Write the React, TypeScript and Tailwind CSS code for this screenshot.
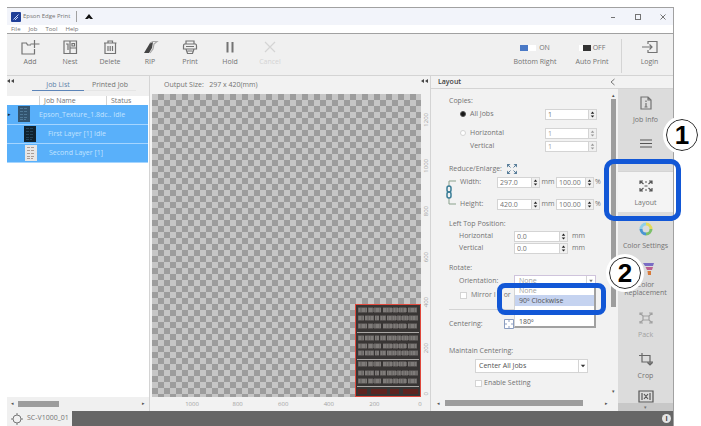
import React, { useState } from 'react';

const FONT = "font-['Open_Sans','Noto_Sans',sans-serif]";

type Tool = { label: string; icon: React.ReactNode; disabled?: boolean };

function Glyph({ children, className = 'w-5 h-4' }: { children: React.ReactNode; className?: string }) {
  return (
    <svg viewBox="0 0 20 16" className={className} fill="none" stroke="currentColor" strokeWidth="1.2">
      {children}
    </svg>
  );
}

const tools: Tool[] = [
  {
    label: 'Add',
    icon: (
      <Glyph>
        <path d="M11 6H7.500L6.500 4H2v11h12.500v-5M14.500 1v8M10.500 5h9" />
      </Glyph>
    ),
  },
  {
    label: 'Nest',
    icon: (
      <Glyph>
        <path d="M4 2h12.500v12.500H4zM10 2v12.500M10 9h6.500M12 4.500h2.500v2.500H12zM6 5h2v6" />
      </Glyph>
    ),
  },
  {
    label: 'Delete',
    icon: (
      <Glyph>
        <path d="M4 4h12.500M8 4V2h4.500v2M5 4v10.500h10.500V4M8 7v5M10.200 7v5M12.500 7v5" />
      </Glyph>
    ),
  },
  {
    label: 'RIP',
    icon: (
      <Glyph>
        <path d="M4 14 10 4l3-1-1 6-3 5z" fill="#444" stroke="none" />
        <path d="M10 4 13 2.500h4L14 5l-1 5-3 4" stroke="#aaa" />
      </Glyph>
    ),
  },
  {
    label: 'Print',
    icon: (
      <Glyph>
        <path d="M6 5V2h8v3M4.500 5h11a2 2 0 0 1 1 2v3h-13V7a2 2 0 0 1 1-2zM6 10l1.500 4.500h5L14 10M6 7.500h8M7.500 12h5" />
      </Glyph>
    ),
  },
  {
    label: 'Hold',
    icon: (
      <Glyph>
        <path d="M7.500 3v10.500M12.500 3v10.500" strokeWidth="2" />
      </Glyph>
    ),
  },
  {
    label: 'Cancel',
    disabled: true,
    icon: (
      <Glyph>
        <path d="m5 3 10 10M15 3 5 13" />
      </Glyph>
    ),
  },
];

const jobs = [
  { name: 'Epson_Texture_1.8dc..', status: 'Idle', thumb: 'bg-[#33546f]', ink: '#4f7896', indent: 'ml-[3px]', gap: 'ml-[9px]', parent: true },
  { name: 'First Layer [1]', status: 'Idle', thumb: 'bg-[#10222f]', ink: '#24445a', indent: 'ml-[17px]', gap: 'ml-[12px]' },
  { name: 'Second Layer [1]', status: '', thumb: 'bg-[#e6e6e6]', ink: '#a89c96', indent: 'ml-[18px]', gap: 'ml-[12px]' },
];

function Thumb({ ink }: { ink: string }) {
  return (
    <svg viewBox="0 0 12 16" className="w-3 h-4" stroke={ink} strokeDasharray="3 1">
      <path d="M2 2.500h8M2 5.500h8M2 8.500h8M2 11.500h8M2 13.500h6" />
    </svg>
  );
}

function TitleBar() {
  return (
    <>
      <div className="h-[17px] flex items-center bg-[#f2f4fa] pl-1 pr-1">
        <svg viewBox="0 0 10 10" className="w-[10px] h-[10px]">
          <rect width="10" height="10" rx="1" fill="#1f3f98" />
          <path d="M2.500 7.500 7.500 2.500M4 8l3-3" stroke="#c9d8ff" />
        </svg>
        <h1 className="ml-[2px] text-[6px] text-neutral-500">Epson Edge Print</h1>
        <span className="ml-[6px] w-px h-[11px] bg-neutral-400" />
        <svg viewBox="0 0 8 6" className="ml-[8px] w-2 h-[6px]">
          <path d="M0 5 4 0l4 5H5.500L4 4 2.500 5z" fill="#111" />
        </svg>
        <div className="ml-auto flex gap-[12px] text-neutral-500">
          <button type="button" aria-label="Minimize" className="w-[13px] flex justify-center">
            <svg viewBox="0 0 8 8" className="w-2 h-2" stroke="currentColor">
              <path d="M2 4.500h4" />
            </svg>
          </button>
          <button type="button" aria-label="Maximize" className="w-[13px] flex justify-center">
            <svg viewBox="0 0 8 8" className="w-2 h-2" stroke="currentColor" fill="none">
              <rect x="1.500" y="1.500" width="5" height="5" />
            </svg>
          </button>
          <button type="button" aria-label="Close" className="w-[13px] flex justify-center">
            <svg viewBox="0 0 8 8" className="w-2 h-2" stroke="currentColor">
              <path d="m1.500 1.500 5 5M6.500 1.500l-5 5" />
            </svg>
          </button>
        </div>
      </div>
      <nav className="h-[9px] flex items-center gap-[8px] bg-white border-b border-neutral-400 pl-1 text-[6px] leading-[8px] text-neutral-500">
        <button type="button">File</button>
        <button type="button">Job</button>
        <button type="button">Tool</button>
        <button type="button">Help</button>
      </nav>
    </>
  );
}

function Toolbar() {
  const [bottomRight, setBottomRight] = useState(true);
  const [autoPrint, setAutoPrint] = useState(false);

  return (
    <div className="h-[42px] flex items-start bg-[#f0f0f0] border-b border-neutral-300 pt-[5px] pl-[3px] text-neutral-500">
      {tools.map((tool) => (
        <button
          key={tool.label}
          type="button"
          disabled={tool.disabled}
          className={`w-[40px] flex flex-col items-center text-[7px] leading-[10px] gap-[2px] ${tool.disabled ? 'text-neutral-300' : ''}`}
        >
          {tool.icon}
          {tool.label}
        </button>
      ))}
      <div className="ml-auto flex pt-1">
        <label className="w-[60px] flex flex-col items-center text-[7px] leading-[10px] gap-1">
          <input
            type="checkbox"
            checked={bottomRight}
            onChange={(e) => setBottomRight(e.target.checked)}
            className="sr-only"
          />
          <span className="flex items-center gap-[3px] h-[10px]">
            <span className="w-4 h-[6px] bg-white flex">
              <span className="w-2 bg-[#4a79c6]" />
            </span>
            ON
          </span>
          Bottom Right
        </label>
        <label className="w-[54px] flex flex-col items-center text-[7px] leading-[10px] gap-1">
          <input
            type="checkbox"
            checked={autoPrint}
            onChange={(e) => setAutoPrint(e.target.checked)}
            className="sr-only"
          />
          <span className="flex items-center gap-[2px] h-[10px]">
            <span className="w-3 h-[6px] bg-white flex justify-end">
              <span className="w-2 bg-[#333]" />
            </span>
            OFF
          </span>
          Auto Print
        </label>
      </div>
      <div className="ml-[2px] h-[34px] w-[52px] border-l border-neutral-300 flex justify-center">
        <button type="button" className="ml-1 flex flex-col items-center text-[7px] leading-[10px] gap-[2px]">
          <Glyph>
            <path d="M8 5V2.500h9v11H8V11M2 8h10M9.500 5.500 12 8l-2.500 2.500" />
          </Glyph>
          Login
        </button>
      </div>
    </div>
  );
}

function Collapse() {
  return (
    <svg viewBox="0 0 8 6" className="w-2 h-[6px]" fill="#444">
      <path d="M0 3 3 1v4zM4 3l3-2v4z" />
    </svg>
  );
}

function JobPanel() {
  return (
    <section className="w-[142px] shrink-0 flex flex-col bg-white">
      <div className="h-[20px] flex items-start bg-[#f0f0f0] text-[7px] leading-[10px] text-neutral-500">
        <span className="pt-[2px] w-[25px]">
          <Collapse />
        </span>
        <button type="button" className="w-[52px] h-[15px] pt-1 border-b border-[#5b84b8] text-[#5d7fa8]">
          Job List
        </button>
        <button type="button" className="w-[52px] h-[15px] pt-1 border-b border-neutral-200">
          Printed Job
        </button>
      </div>
      <table className="w-[141px] table-fixed border-collapse text-[7px] leading-[9px]">
        <thead>
          <tr className="h-[9px] bg-white text-neutral-500">
            <th className="w-[99px] p-0 font-normal text-left">
              <span className="ml-[32px] pl-1 block border-l border-neutral-300">Job Name</span>
            </th>
            <th className="p-0 font-normal text-left">
              <span className="pl-1 block border-l border-neutral-300">Status</span>
            </th>
          </tr>
        </thead>
        <tbody>
          {jobs.map((job) => (
            <tr key={job.name} className="h-[19px] bg-[#59b0fa] border-b border-[#a5d5ff] text-[#c2e3ff]">
              <td colSpan={2} className="p-0">
                <div className="flex items-center whitespace-nowrap">
                  {job.parent && <span className="ml-px w-[7px] text-[5px] text-[#123]">▸</span>}
                  <span className={`${job.indent} ${job.thumb} w-3 h-4`}>
                    <Thumb ink={job.ink} />
                  </span>
                  <span className={job.gap}>
                    {job.name} {job.status}
                  </span>
                </div>
              </td>
            </tr>
          ))}
        </tbody>
      </table>
      <div className="mt-auto h-[14px] flex items-center bg-[#f0f0f0] px-1 text-neutral-600">
        <span className="text-[5px] w-[7px]">◂</span>
        <span className="w-[41px] h-[6px] bg-[#9d9d9d]" />
        <span className="ml-auto text-[5px]">▸</span>
      </div>
    </section>
  );
}

const textRows = [6, 14, 22, 34, 42, 49, 60, 69, 77];

function PrintPreview() {
  return (
    <svg viewBox="0 0 66 93" className="w-[66px] h-[93px]">
      <rect x="0.500" y="0.500" width="65" height="92" fill="#383534" stroke="#e0483c" />
      {textRows.map((y, i) => (
        <g key={y} fill="none">
          <path d={`M3 ${y}h60`} stroke="#6e6b69" strokeWidth="5" strokeDasharray={i % 2 ? '6 1 9 1 4 1' : '9 1 5 1 7 2'} />
          <path d={`M4 ${y - 1}h58M4 ${y + 1}h58`} stroke="#8f8c8a" strokeDasharray={i % 2 ? '2 2 1 1' : '1 2 3 1'} />
        </g>
      ))}
      <path d="M2 28.500h62M2 55.500h62M2 82.500h62" stroke="#aaa7a5" />
      <path d="M3 87.500h60" stroke="#5e2420" strokeWidth="5" strokeDasharray="9 4 16 3" />
    </svg>
  );
}

function CanvasPanel() {
  return (
    <section className="flex-1 min-w-0 flex flex-col border-l border-neutral-300 bg-[#f2f2f2] text-neutral-400">
      <div className="h-[18px] flex items-start pl-[14px] text-[7px] leading-[10px] text-neutral-500">
        <p className="pt-1 whitespace-pre">Output Size:   297 x 420(mm)</p>
        <span className="ml-auto pt-[2px] pr-px">
          <Collapse />
        </span>
      </div>
      <div className="flex-1 flex">
        <div className="flex-1 ml-[2px] flex items-end justify-end bg-[#c6c6c6] bg-[repeating-conic-gradient(#9d9d9d_0_25%,#c6c6c6_0_50%)] bg-[length:12px_12px]">
          <PrintPreview />
        </div>
        <div className="w-[9px] flex flex-col justify-between items-center pt-[23px] text-[6px] leading-[8px]">
          {['1200', '1000', '800', '600', '400', '200', '0'].map((n) => (
            <span key={n} className="h-[6px] flex items-center justify-center">
              <span className="[writing-mode:vertical-rl] rotate-180">{n}</span>
            </span>
          ))}
        </div>
      </div>
      <div className="h-[14px] flex justify-between pt-[3px] pl-[40px] pr-2 text-[6px] leading-[8px]">
        {['1000', '800', '600', '400', '200', '0'].map((n) => (
          <span key={n} className="w-1 flex justify-center">
            {n}
          </span>
        ))}
      </div>
    </section>
  );
}

function Spinner({ label, value, width, muted }: { label: string; value: string; width: string; muted?: boolean }) {
  return (
    <span className={`${width} h-[11px] flex bg-white border border-neutral-300`}>
      <input
        type="text"
        aria-label={label}
        defaultValue={value}
        className={`flex-1 min-w-0 px-[2px] text-[7px] leading-[9px] outline-none ${muted ? 'text-neutral-400' : 'text-neutral-500'}`}
      />
      <svg viewBox="0 0 8 9" className="w-2 h-[9px] bg-[#f0f0f0] border-l border-neutral-300" fill={muted ? '#999' : '#222'}>
        <path d="M4 1 6 3.500H2zM4 8 6 5.500H2z" />
      </svg>
    </span>
  );
}

function LayoutPanel() {
  const [target, setTarget] = useState('all');
  const options = ['None', '90º Clockwise', '180º'];

  return (
    <section className="w-[188px] shrink-0 flex flex-col border-l border-neutral-300 bg-[#f2f2f2] text-[7px] leading-[12px] text-neutral-500">
      <header className="h-[13px] flex items-center justify-between border-b border-neutral-300 pl-[7px] pr-[3px]">
        <h2 className="font-semibold text-neutral-700">Layout</h2>
        <button type="button" aria-label="Collapse layout">
          <svg viewBox="0 0 5 8" className="w-[5px] h-2" fill="none" stroke="#777">
            <path d="M4.500 1 1 4l3.500 3" />
          </svg>
        </button>
      </header>
      <div className="flex-1 flex">
        <form className="flex-1 min-w-0 pl-[18px] pt-[6px]">
          <h3>Copies:</h3>
          <div className="mt-px h-3 flex items-center">
            <label className="w-[96px] pl-[11px] flex items-center">
              <input
                type="radio"
                name="target"
                checked={target === 'all'}
                onChange={() => setTarget('all')}
                className="appearance-none w-[6px] h-[6px] rounded-full bg-white border border-neutral-300 checked:bg-neutral-900 checked:border-neutral-600"
              />
              <span className="ml-1">All Jobs</span>
            </label>
            <Spinner label="Copies of all jobs" value="1" width="w-[52px]" />
          </div>
          <div className="mt-[7px] h-3 flex items-center">
            <label className="w-[96px] pl-[11px] flex items-center">
              <input
                type="radio"
                name="target"
                checked={target === 'horizontal'}
                onChange={() => setTarget('horizontal')}
                className="appearance-none w-[6px] h-[6px] rounded-full bg-white border border-neutral-300 checked:bg-neutral-900 checked:border-neutral-600"
              />
              <span className="ml-1">Horizontal</span>
            </label>
            <Spinner label="Horizontal copies" value="1" width="w-[52px]" muted />
          </div>
          <div className="mt-px h-3 flex items-center">
            <span className="w-[96px] pl-[21px]">Vertical</span>
            <Spinner label="Vertical copies" value="1" width="w-[52px]" muted />
          </div>

          <h3 className="mt-[11px] h-3 flex items-center gap-1">
            Reduce/Enlarge:
            <svg viewBox="0 0 12 12" className="w-3 h-3" fill="#5a7f9b">
              <path d="M1 1h3.500L1 4.500zM11 1v3.500L7.500 1zM1 11V7.500L4.500 11zM11 11H7.500L11 7.500z" />
              <path d="m2 2 2.500 2.500M10 2 7.500 4.500M2 10l2.500-2.500M10 10 7.500 7.500" stroke="#5a7f9b" />
            </svg>
          </h3>
          <div className="mt-px -ml-[4px] flex">
            <svg viewBox="0 0 12 34" className="w-3 h-[34px]" fill="none">
              <path d="M11 5H4v6M4 22v6h7" stroke="#8aa18c" />
              <rect x="2" y="10" width="4" height="6" rx="2" stroke="#3a7d96" strokeWidth="1.500" />
              <rect x="2" y="16" width="4" height="6" rx="2" stroke="#3a7d96" strokeWidth="1.500" />
            </svg>
            <div className="flex flex-col gap-[10px]">
              <div className="h-3 flex items-center whitespace-nowrap">
                <span className="w-[40px] pl-[3px]">Width:</span>
                <Spinner label="Width" value="297.0" width="w-[43px]" />
                <span className="w-[16px] text-center">mm</span>
                <Spinner label="Width percent" value="100.00" width="w-[38px]" />
                <span className="pl-px">%</span>
              </div>
              <div className="h-3 flex items-center whitespace-nowrap">
                <span className="w-[40px] pl-[3px]">Height:</span>
                <Spinner label="Height" value="420.0" width="w-[43px]" />
                <span className="w-[16px] text-center">mm</span>
                <Spinner label="Height percent" value="100.00" width="w-[38px]" />
                <span className="pl-px">%</span>
              </div>
            </div>
          </div>

          <h3 className="mt-2">Left Top Position:</h3>
          <div className="h-3 flex items-center">
            <span className="w-[65px] pl-[10px]">Horizontal</span>
            <Spinner label="Left position" value="0.0" width="w-[54px]" />
            <span className="pl-1">mm</span>
          </div>
          <div className="h-3 flex items-center">
            <span className="w-[65px] pl-[10px]">Vertical</span>
            <Spinner label="Top position" value="0.0" width="w-[54px]" />
            <span className="pl-1">mm</span>
          </div>

          <h3 className="mt-2">Rotate:</h3>
          <div className="mt-px h-3 flex items-center">
            <label htmlFor="orientation" className="w-[65px] pl-[10px]">
              Orientation:
            </label>
            <div className="relative w-[82px]">
              <select
                id="orientation"
                className="appearance-none block w-full h-3 bg-white border border-[#cfc4dc] pl-1 text-[7px] leading-[10px] text-neutral-400"
              >
                <option>None</option>
              </select>
              <svg viewBox="0 0 9 10" className="absolute right-px top-px w-[9px] h-[10px] border-l border-neutral-300" fill="#777">
                <path d="M2.500 3.500h4l-2 3z" />
              </svg>
              <ul className="absolute z-10 top-3 left-0 w-full bg-white border border-t-0 border-r-2 border-b-2 border-l-neutral-300 border-neutral-400 text-neutral-600">
                {options.map((o, i) => (
                  <li
                    key={o}
                    className={
                      i === 1
                        ? 'h-[11px] leading-[11px] pl-1 bg-[#c5d3f0]'
                        : i === 0
                          ? 'h-2 leading-[8px] pl-1 text-neutral-400'
                          : 'mt-[11px] h-[9px] leading-[9px] pl-1'
                    }
                  >
                    {o}
                  </li>
                ))}
              </ul>
              <div className="absolute z-20 -left-[17px] top-2 w-[109px] h-8 border-[5px] border-[#1257d6] rounded-[8px]">
                <span className="absolute left-[107px] -top-[31px] w-8 h-8 rounded-full bg-white border border-neutral-800 outline-3 outline-white flex items-center justify-center text-[26px] leading-[26px] font-bold text-black font-['Liberation_Sans',sans-serif]">
                  2
                </span>
              </div>
            </div>
          </div>
          <div className="mt-[2px] h-3 flex items-center">
            <label className="pl-[11px] flex items-center gap-1 whitespace-nowrap">
              <input type="checkbox" className="appearance-none w-[7px] h-[7px] bg-white border border-neutral-300 checked:bg-neutral-600" />
              Mirror I
            </label>
            <span className="ml-[8px] relative z-30">or</span>
          </div>

          <hr className="mt-2 mr-4 border-neutral-300" />
          <div className="mt-2 h-3 flex items-center">
            <span className="w-[55px]">Centering:</span>
            <svg viewBox="0 0 10 10" className="w-[10px] h-[10px]" fill="#fff" stroke="#8b9dc0">
              <path d="M0.500 0.500h9v9h-9z" />
              <path d="M5 0v3M5 7v3M0 5h3M7 5h3" />
            </svg>
          </div>

          <label htmlFor="maintain" className="block mt-[15px]">
            Maintain Centering:
          </label>
          <div className="mt-[2px] ml-[26px] w-[113px] relative">
            <select
              id="maintain"
              className="appearance-none block w-full h-[14px] bg-white border border-neutral-300 pl-[3px] text-[7px] leading-[12px] text-neutral-600"
            >
              <option>Center All Jobs</option>
            </select>
            <svg viewBox="0 0 9 12" className="absolute right-px top-px w-[9px] h-3 border-l border-neutral-300" fill="#333">
              <path d="M2 4.500h5l-2.500 3z" />
            </svg>
          </div>
          <label className="mt-1 ml-[26px] flex items-center gap-[2px]">
            <input type="checkbox" className="appearance-none w-[7px] h-[7px] bg-white border border-neutral-300 checked:bg-neutral-600" />
            Enable Setting
          </label>
        </form>
        <div className="w-[10px] flex flex-col items-center pt-[2px] text-[5px] leading-[8px] text-neutral-600">
          <span>▴</span>
          <span className="w-[5px] h-[208px] bg-[#9d9d9d]" />
          <span className="mt-auto">▾</span>
        </div>
      </div>
      <div className="h-[16px] flex items-start pt-[5px] pl-[6px] pr-[10px] text-[5px] leading-[6px] text-neutral-600">
        <span className="w-2">◂</span>
        <span className="w-[138px] h-[6px] bg-[#9d9d9d]" />
        <span className="ml-auto">▸</span>
      </div>
    </section>
  );
}

function SideIcon({ children }: { children: React.ReactNode }) {
  return (
    <svg viewBox="0 0 16 14" className="w-4 h-[14px] shrink-0" fill="none" stroke="currentColor" strokeWidth="1.2">
      {children}
    </svg>
  );
}

const sideButton = 'w-full h-[41px] pt-[7px] flex flex-col items-center gap-[5px] whitespace-nowrap';

function SidePanel() {
  return (
    <aside className="w-[55px] shrink-0 flex flex-col bg-[#dcdcdc] text-[7px] leading-[10px] text-neutral-500">
      <div className="h-[13px] bg-[#f2f2f2] border-b border-neutral-300" />
      <button type="button" className={sideButton}>
        <SideIcon>
          <path d="M3 1h7l3 3v9H3zM10 1v3h3M8 4.500V6M8 7v4M6.500 11h3" />
        </SideIcon>
        Job Info
      </button>
      <button type="button" aria-label="Job list" className={sideButton}>
        <SideIcon>
          <path d="M2 3h12M2 6.500h12M2 10h12" stroke="#555" />
        </SideIcon>
      </button>
      <div className="relative">
        <button type="button" className={`${sideButton} bg-[#f4f4f4] border-t border-neutral-300`}>
          <SideIcon>
            <path d="M2 5V2h3M2 2l3.500 3M14 5V2h-3M14 2l-3.500 3M2 9v3h3M2 12l3.500-3M14 9v3h-3M14 12l-3.500-3" stroke="#555" />
            <path d="M7 3h2M7 11h2M6.500 7h3" stroke="#555" />
          </SideIcon>
          Layout
        </button>
        <div className="absolute z-20 -left-[14px] -top-3 w-[77px] h-[62px] border-[5px] border-[#1257d6] rounded-[10px]">
          <span className="absolute left-[57px] -top-[45px] w-8 h-8 rounded-full bg-white border border-neutral-800 outline-3 outline-white flex items-center justify-center text-[26px] leading-[26px] font-bold text-black font-['Liberation_Sans',sans-serif]">
            1
          </span>
        </div>
      </div>
      <button type="button" className={`${sideButton} mt-[3px]`}>
        <svg viewBox="0 0 16 14" className="w-4 h-[14px]" fill="none" strokeWidth="3">
          <path d="M8 2a5 5 0 0 0-5 5" stroke="#8fd0e8" />
          <path d="M3 7a5 5 0 0 0 5 5" stroke="#4a96d2" />
          <path d="M8 12a5 5 0 0 0 5-5" stroke="#7cc06a" />
          <path d="M13 7a5 5 0 0 0-5-5" stroke="#e4dc5a" />
        </svg>
        Color Settings
      </button>
      <button type="button" className="w-full h-[48px] pt-[5px] flex flex-col items-center gap-[4px]">
        <svg viewBox="0 0 16 16" className="ml-1 w-4 h-4">
          <path d="M3 2h11l-1 3H5z" fill="#7a6cc4" />
          <path d="M5.500 6H13l-1 3H7z" fill="#bd5f8f" />
          <path d="M7.500 10h3.500v4H8z" fill="#d87a3a" />
        </svg>
        <span className="text-center leading-[8px]">
          Color
          <br />
          Replacement
        </span>
      </button>
      <button type="button" disabled className={`${sideButton} text-neutral-400`}>
        <SideIcon>
          <path d="M2 4V2h3M14 4V2h-3M2 10v2h3M14 10v2h-3M5 5h6v4H5zM2 2l3 3M14 2l-3 3M2 12l3-3M14 12l-3-3" />
        </SideIcon>
        Pack
      </button>
      <button type="button" className={sideButton}>
        <SideIcon>
          <path d="M4 1v9h11M1 3.500h11V13M9.500 10.500 12 13l2.500-2.500" stroke="#666" />
        </SideIcon>
        Crop
      </button>
      <button type="button" aria-label="Tile" className="w-full h-[17px] pt-[3px] flex justify-center overflow-hidden">
        <SideIcon>
          <path d="M1 2h14v11H1zM4 4v7M12 4v7M6 5l4 5M10 5l-4 5" stroke="#555" />
        </SideIcon>
      </button>
      <button type="button" aria-label="More" className="mt-auto h-2 bg-[#c8c8c8] flex items-center justify-center text-[5px] leading-[8px]">
        ▾
      </button>
    </aside>
  );
}

export default function App() {
  return (
    <div className={`min-h-screen flex bg-white pt-[7px] pl-[7px] pr-[27px] ${FONT}`}>
      <div className="flex-1 min-w-0 flex flex-col border-t border-r border-neutral-400">
        <TitleBar />
        <Toolbar />
        <main className="flex-1 flex">
          <JobPanel />
          <CanvasPanel />
          <LayoutPanel />
          <SidePanel />
        </main>
        <footer className="h-[15px] shrink-0 flex items-center justify-between bg-[#666] pr-[2px]">
          <span className="w-[65px] h-full flex items-center gap-[4px] bg-[#f0f0f0] pl-1 text-[7px] text-neutral-500 whitespace-nowrap">
            <svg viewBox="0 0 12 12" className="w-3 h-3 shrink-0" fill="none" stroke="#777">
              <circle cx="6" cy="6" r="4" />
              <path d="M6 0v2M6 10v2M0 6h2M10 6h2" />
            </svg>
            SC-V1000_01
          </span>
          <button
            type="button"
            aria-label="Information"
            className="w-[9px] h-[9px] rounded-full bg-neutral-200 text-[7px] leading-[9px] font-bold text-neutral-700"
          >
            i
          </button>
        </footer>
      </div>
    </div>
  );
}
